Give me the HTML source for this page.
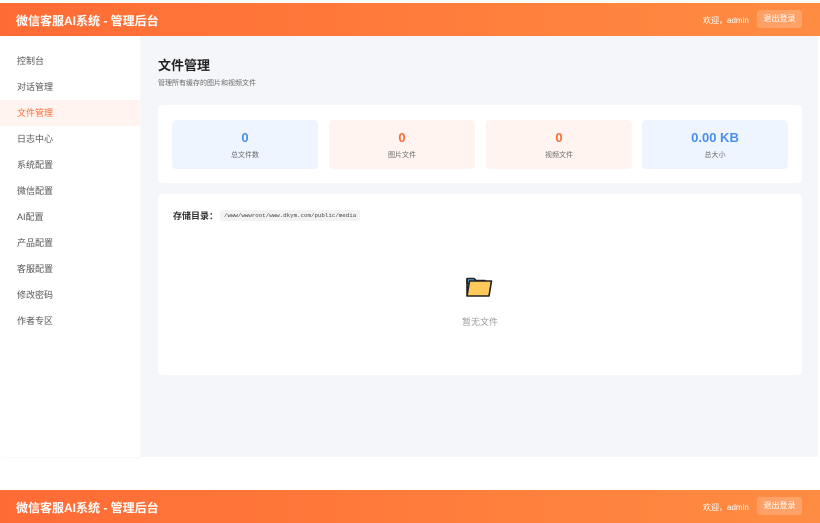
<!DOCTYPE html>
<html><head><meta charset="utf-8"><style>
*{margin:0;padding:0;box-sizing:border-box}
body{width:820px;height:523px;overflow:hidden;background:#fff;font-family:"Liberation Sans","Noto Sans CJK SC",sans-serif;position:relative}
.hdr{position:absolute;left:0;width:820px;height:33px;background:linear-gradient(90deg,#ff6b35,#ff8c42);color:#fff}
.hdr .t{position:absolute;left:16px;top:9px;font-size:12px;font-weight:bold}
.hdr .w{position:absolute;left:703px;top:12px;font-size:8px}
.hdr .b{position:absolute;left:757px;top:7px;width:45px;height:18px;border-radius:3px;background:rgba(255,255,255,.2);font-size:8px;text-align:center;line-height:18px}
.side{position:absolute;left:0;top:36px;width:140px;height:421px;background:#fff;box-shadow:1px 0 3px rgba(0,0,0,.05)}
.side div{height:26px;line-height:26px;padding-left:17px;font-size:9px;color:#555}
.side .a{background:#fff4f0;color:#ff6b35}
.main{position:absolute;left:141px;top:36px;width:677px;height:421px;background:#f5f6fa}
h1{position:absolute;left:17px;top:19px;font-size:13px;color:#222}
.sub{position:absolute;left:17px;top:42px;font-size:7px;color:#666}
.card{position:absolute;left:17px;width:644px;background:#fff;border-radius:4px}
.st{position:absolute;top:15px;width:146px;height:49px;border-radius:4px;text-align:center}
.st b{display:block;margin-top:10px;font-size:13px}
.st span{display:block;margin-top:5px;font-size:7px;color:#666}
</style></head><body>
<div class="hdr" style="top:3px"><div class="t">微信客服AI系统 - 管理后台</div><div class="w">欢迎，admin</div><div class="b">退出登录</div></div>
<div class="side" style="padding-top:12px">
<div>控制台</div><div>对话管理</div><div class="a">文件管理</div><div>日志中心</div><div>系统配置</div><div>微信配置</div><div>AI配置</div><div>产品配置</div><div>客服配置</div><div>修改密码</div><div>作者专区</div>
</div>
<div class="main">
<h1>文件管理</h1><div class="sub">管理所有缓存的图片和视频文件</div>
<div class="card" style="top:69px;height:78px">
<div class="st" style="left:14px;background:#eef5ff"><b style="color:#4a8ef0">0</b><span>总文件数</span></div>
<div class="st" style="left:171px;background:#fff4ef"><b style="color:#ff6b35">0</b><span>图片文件</span></div>
<div class="st" style="left:328px;background:#fff4ef"><b style="color:#ff6b35">0</b><span>视频文件</span></div>
<div class="st" style="left:484px;background:#eef5ff"><b style="color:#4a8ef0">0.00 KB</b><span>总大小</span></div>
</div>
<div class="card" style="top:158px;height:181px">
<div style="position:absolute;left:15px;top:15px;font-size:9px;font-weight:bold;color:#333">存储目录：</div>
<div style="position:absolute;left:62px;top:16px;background:#f3f3f3;border-radius:2px;padding:2px 4px;font-family:'Liberation Mono',monospace;font-size:5.8px;color:#444">/www/wwwroot/www.dkym.com/public/media</div>
<svg style="position:absolute;left:307px;top:81px" width="30" height="24" viewBox="0 0 30 24"><path d="M2 3.5h7l2 2h9v3H2z" fill="#4a9fd8" stroke="#222" stroke-width="1.6" stroke-linejoin="round"/><path d="M2 21V4M4.5 6h22l-2.5 15H2z" fill="#fcc95a" stroke="#222" stroke-width="1.6" stroke-linejoin="round"/></svg>
<div style="position:absolute;left:0;width:644px;top:121px;text-align:center;font-size:9px;color:#999">暂无文件</div>
</div>
</div>
<div class="hdr" style="top:490px"><div class="t">微信客服AI系统 - 管理后台</div><div class="w">欢迎，admin</div><div class="b">退出登录</div></div>
</body></html>
